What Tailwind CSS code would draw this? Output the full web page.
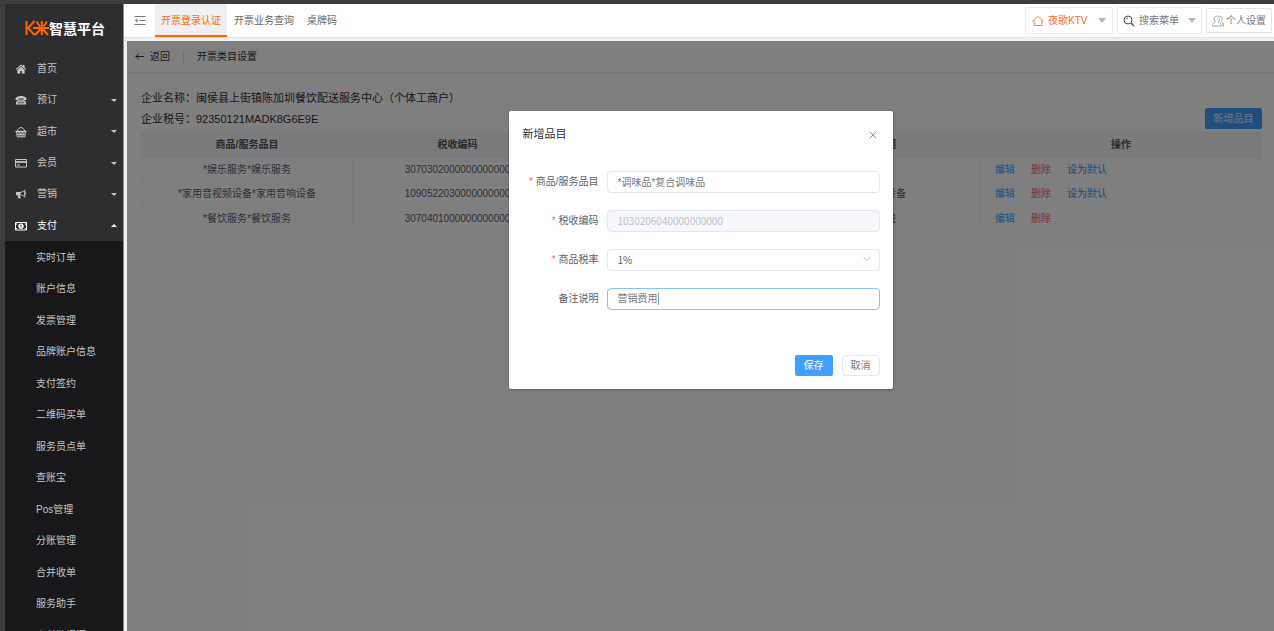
<!DOCTYPE html>
<html lang="zh-CN">
<head>
<meta charset="utf-8">
<meta name="viewport" content="width=device-width, initial-scale=1">
<title>K米智慧平台</title>
<script src="https://cdn.jsdelivr.net/npm/@tailwindcss/browser@4"></script>
</head>
<body class="h-screen overflow-hidden flex bg-[#3d3d3d] pt-1 pl-[5px] font-['Liberation_Sans','Noto_Sans_CJK_SC',sans-serif] text-[10px] leading-4 text-[#606266]">

<aside class="w-[118px] shrink-0 bg-[#2e2e30] text-[#c4c4c4] overflow-hidden">
  <div class="h-[49px] flex items-center justify-center pl-[2px] pb-[2px] text-white">
    <svg class="w-6 h-4 shrink-0" viewBox="0 0 24 16" fill="none" stroke="#f60" stroke-width="2"><path d="M1.500 1v14M9.500 1L3 8l6.500 7M11.500 1.500l3.500 5M22 1.500l-3.500 5M16.800 1v14M8 8h16M16 8.500L10 15M17.500 8.500L23 15"/></svg>
    <span class="text-[14px] leading-5 font-bold font-['Noto_Sans_CJK_SC',sans-serif]">智慧平台</span>
  </div>
  <nav>
    <ul>
      <li class="h-[31px]"><a href="#" class="h-full flex items-center pt-px pl-[10px] pr-[6px]"><svg class="w-3 h-3 mr-[10px]" viewBox="0 0 12 12" fill="currentColor"><path d="M6 1.500L.800 6l.7.7L6 2.900l4.500 3.800.7-.7-1.700-1.500V2H8v1.200zM2.300 6.900V10.500h2.900V8h1.600v2.500h2.900V6.900L6 3.800z"/></svg>首页</a></li>
      <li class="h-[31px]"><a href="#" class="h-full flex items-center pt-px pl-[10px] pr-[6px]"><svg class="w-3 h-3 mr-[10px]" viewBox="0 0 12 12" fill="currentColor"><path d="M.500 5C.500.900 11.500.900 11.500 5v1H8.500V4.600h-5V6h-3z"/><path d="M3.500 5.500h5L11 8v2.500H1V8z"/><path fill="#2e2e30" d="M3.500 6.600h1v.8h-1zM5.500 6.600h1v.8h-1zM7.500 6.600h1v.8h-1zM2.500 8.500h7v.8h-7z"/></svg>预订<span class="ml-auto border-x-[3px] border-t-[3px] border-x-transparent border-t-current"></span></a></li>
      <li class="h-8"><a href="#" class="h-full flex items-center pt-px pl-[10px] pr-[6px]"><svg class="w-3 h-3 mr-[10px]" viewBox="0 0 12 12" fill="none" stroke="currentColor"><path d="M2.500 5C3 .500 9 .500 9.500 5"/><path stroke-width="1.500" d="M.500 5.500h11"/><path d="M1.500 5.500l.7 5.300h7.600l.7-5.300M4 6v4.500M6 6v4.500M8 6v4.500M2 8.300h8"/></svg>超市<span class="ml-auto border-x-[3px] border-t-[3px] border-x-transparent border-t-current"></span></a></li>
      <li class="h-[31px]"><a href="#" class="h-full flex items-center pt-px pl-[10px] pr-[6px]"><svg class="w-3 h-3 mr-[10px]" viewBox="0 0 12 12" fill="none" stroke="currentColor"><path d="M.500 2.500h11v7.500H.500z"/><path stroke-width="1.800" d="M1 5h10"/><path d="M2 8h3"/></svg>会员<span class="ml-auto border-x-[3px] border-t-[3px] border-x-transparent border-t-current"></span></a></li>
      <li class="h-[31px]"><a href="#" class="h-full flex items-center pt-px pl-[10px] pr-[6px]"><svg class="w-3 h-3 mr-[10px]" viewBox="0 0 12 12" fill="currentColor"><path fill-rule="evenodd" d="M1 4h4c2 0 3.800-1 5.200-2.500V4.400a1 1 0 0 1 0 2.200V9.700C8.800 8.200 7 7.300 5 7.200c-.3.900.2 1.700 1 2.300-.5 1.200-1.800 1.200-2.600.8C3 9 2.700 8 2.900 7.200H1zM9.200 3.300c-1 .8-2.200 1.300-3.500 1.500v1.800c1.300.1 2.500.6 3.500 1.400z"/></svg>营销<span class="ml-auto border-x-[3px] border-t-[3px] border-x-transparent border-t-current"></span></a></li>
      <li class="h-8"><a href="#" class="h-full flex items-center pt-px pl-[10px] pr-[6px] text-white"><svg class="w-3 h-3 mr-[10px]" viewBox="0 0 12 12" fill="none" stroke="currentColor"><path d="M.500 2.500h11v7.500H.500z"/><circle cx="6" cy="6.200" r="2.300" fill="currentColor"/><path stroke="#2e2e30" stroke-width=".800" d="M5.400 5.500l.7-.5v2.500"/><path d="M1 4h1.200M9.800 4H11M1 8.500h1.200M9.800 8.500H11"/></svg>支付<span class="ml-auto border-x-[3px] border-b-[3px] border-x-transparent border-b-current"></span></a></li>
    </ul>
    <ul class="bg-[#18181a]">
      <li class="odd:h-8 even:h-[31px]"><a href="#" class="h-full flex items-center pt-px pl-[31px]">实时订单</a></li>
      <li class="odd:h-8 even:h-[31px]"><a href="#" class="h-full flex items-center pt-px pl-[31px]">账户信息</a></li>
      <li class="odd:h-8 even:h-[31px]"><a href="#" class="h-full flex items-center pt-px pl-[31px]">发票管理</a></li>
      <li class="odd:h-8 even:h-[31px]"><a href="#" class="h-full flex items-center pt-px pl-[31px]">品牌账户信息</a></li>
      <li class="odd:h-8 even:h-[31px]"><a href="#" class="h-full flex items-center pt-px pl-[31px]">支付签约</a></li>
      <li class="odd:h-8 even:h-[31px]"><a href="#" class="h-full flex items-center pt-px pl-[31px]">二维码买单</a></li>
      <li class="odd:h-8 even:h-[31px]"><a href="#" class="h-full flex items-center pt-px pl-[31px]">服务员点单</a></li>
      <li class="odd:h-8 even:h-[31px]"><a href="#" class="h-full flex items-center pt-px pl-[31px]">查账宝</a></li>
      <li class="odd:h-8 even:h-[31px]"><a href="#" class="h-full flex items-center pt-px pl-[31px]">Pos管理</a></li>
      <li class="odd:h-8 even:h-[31px]"><a href="#" class="h-full flex items-center pt-px pl-[31px]">分账管理</a></li>
      <li class="odd:h-8 even:h-[31px]"><a href="#" class="h-full flex items-center pt-px pl-[31px]">合并收单</a></li>
      <li class="odd:h-8 even:h-[31px]"><a href="#" class="h-full flex items-center pt-px pl-[31px]">服务助手</a></li>
      <li class="odd:h-8 even:h-[31px]"><a href="#" class="h-full flex items-center pt-px pl-[31px]">支付数据源</a></li>
    </ul>
  </nav>
</aside>

<div class="flex-1 min-w-0 flex flex-col bg-[#f0f0f0] border-l border-[#8a8a8a]">
  <header class="h-[34px] shrink-0 flex items-center bg-white border-b border-[#e4e4e4] text-[#666]">
    <button type="button" aria-label="收起菜单" class="w-[31px] h-full flex items-center justify-center"><svg class="w-3 h-3" viewBox="0 0 12 12" fill="none" stroke="#777"><path d="M.500 1.500h11M5 5.500h6.500M.500 9.500h11"/><path fill="#777" stroke="none" d="M3.500 3.500v4L.800 5.500z"/></svg></button>
    <nav class="h-full flex">
      <a href="#" class="h-full px-[6px] pt-px flex items-center bg-[#f0f0f0] border-b border-[#f60] text-[#ff6a10] shadow-[inset_0_-1px_0_#ff6600]">开票登录认证</a>
      <a href="#" class="h-full px-[7px] pt-px flex items-center">开票业务查询</a>
      <a href="#" class="h-full px-[6px] pt-px flex items-center">桌牌码</a>
    </nav>
    <div class="ml-auto flex items-center gap-1 pr-[2px]">
      <button type="button" class="w-[88px] h-[27px] px-[6px] flex items-center border border-[#eee] rounded-xs text-[#ff6633]"><svg class="w-3 h-3 mr-1" viewBox="0 0 12 12" fill="none" stroke="#ff8040"><path d="M.500 6L6 1.500 11.500 6H9.800v4.500H2.200V6z"/></svg>夜歌KTV<span class="ml-auto border-x-4 border-t-[5px] border-x-transparent border-t-[#b5b5b5]"></span></button>
      <button type="button" class="w-[85px] h-[27px] px-[5px] flex items-center border border-[#eee] rounded-xs text-[#777]"><svg class="w-3 h-3 mr-1" viewBox="0 0 12 12" fill="none" stroke="#555"><circle cx="5" cy="5" r="4"/><path d="M3 4.500A2 2 0 0 1 5 2.800"/><path stroke-width="1.500" d="M8 8l3 3"/></svg>搜索菜单<span class="ml-auto border-x-4 border-t-[5px] border-x-transparent border-t-[#b5b5b5]"></span></button>
      <button type="button" class="w-[66px] h-[25px] px-[5px] flex items-center whitespace-nowrap border border-[#e4e4e4] text-[#777]"><svg class="w-3 h-3 mr-[2px] shrink-0" viewBox="0 0 12 12" fill="none" stroke="#999" stroke-width=".800"><path d="M.500 11V9.500C.500 8 3 8 3.300 7.200 1 4 2.500 1 4.800 1S8.500 4 6.300 7.200C6.500 8 9 8 9 9.500V11zM7 1.200c3.500-.5 4 3.500 2 5.300.3 1 2.500 1 2.500 2.500v2H9.500"/></svg>个人设置</button>
    </div>
  </header>

  <main class="relative flex-1 mt-[3px] ml-[3px] bg-white">
    <div class="h-8 flex items-center pt-px px-2 border-b border-[#ebeef5] text-[#303133]">
      <a href="#" class="flex items-center gap-[5px]"><svg class="w-[10px] h-[10px]" viewBox="0 0 10 10" fill="none" stroke="currentColor"><path d="M9 4.500H1M4 1.500l-3 3 3 3"/></svg>返回</a>
      <span class="mx-[13px] w-px h-3 bg-[#dcdfe6]"></span>
      <h1>开票类目设置</h1>
    </div>
    <div class="pl-[14px] pt-[15px] pr-3">
      <div class="flex justify-between items-end text-[11px] text-[#303133]">
        <div class="leading-[21px] mb-[2px]">
          <p>企业名称：闽侯县上街镇陈加圳餐饮配送服务中心（个体工商户）</p>
          <p>企业税号：92350121MADK8G6E9E</p>
        </div>
        <button type="button" class="w-[57px] h-[21px] mb-[3px] rounded-xs bg-[#409eff] text-[10px] leading-4 text-white/80">新增品目</button>
      </div>
      <table class="w-full table-fixed border-collapse border border-[#f2f4f8] text-center">
        <colgroup><col class="w-[211px]"><col class="w-[210px]"><col class="w-[209px]"><col class="w-[209px]"><col></colgroup>
        <thead>
          <tr class="h-[25px] bg-[#f3f6fb] text-[#555]">
            <th class="border border-[#f2f4f8]">商品/服务品目</th><th class="border border-[#f2f4f8]">税收编码</th><th class="border border-[#f2f4f8]">商品税率</th><th class="border border-[#f2f4f8]">备注说明</th><th class="border border-[#f2f4f8]">操作</th>
          </tr>
        </thead>
        <tbody>
          <tr class="h-6"><td class="border border-[#f2f4f8]">*娱乐服务*娱乐服务</td><td class="border border-[#f2f4f8]">3070302000000000000</td><td class="border border-[#f2f4f8]">1%</td><td class="border border-[#f2f4f8]"></td>
            <td class="border border-[#f2f4f8] text-left pl-[14px]"><div class="flex gap-4"><a href="#" class="text-[#409eff]">编辑</a><a href="#" class="text-[#f56c6c]">删除</a><a href="#" class="text-[#409eff]">设为默认</a></div></td></tr>
          <tr class="h-[25px]"><td class="border border-[#f2f4f8]">*家用音视频设备*家用音响设备</td><td class="border border-[#f2f4f8]">1090522030000000000</td><td class="border border-[#f2f4f8]">1%</td><td class="border border-[#f2f4f8]">家用音响设备</td>
            <td class="border border-[#f2f4f8] text-left pl-[14px]"><div class="flex gap-4"><a href="#" class="text-[#409eff]">编辑</a><a href="#" class="text-[#f56c6c]">删除</a><a href="#" class="text-[#409eff]">设为默认</a></div></td></tr>
          <tr class="h-6"><td class="border border-[#f2f4f8]">*餐饮服务*餐饮服务</td><td class="border border-[#f2f4f8]">3070401000000000000</td><td class="border border-[#f2f4f8]">1%</td><td class="border border-[#f2f4f8]">餐饮免税</td>
            <td class="border border-[#f2f4f8] text-left pl-[14px]"><div class="flex gap-4"><a href="#" class="text-[#409eff]">编辑</a><a href="#" class="text-[#f56c6c]">删除</a></div></td></tr>
        </tbody>
      </table>
    </div>

    <div class="absolute inset-0 flex items-start justify-center bg-black/50 pt-[70px]">
      <form role="dialog" aria-labelledby="dlg" class="w-[384px] rounded-xs bg-white pl-[14px] pr-[13px] pt-[15px] pb-[13px] shadow-[0_1px_3px_rgba(0,0,0,0.3)]">
        <div class="flex items-center justify-between mb-7">
          <h2 id="dlg" class="text-[11px] leading-[17px] text-[#303133]">新增品目</h2>
          <button type="button" aria-label="关闭" class="w-[14px] h-3 flex items-center justify-center"><svg class="w-2 h-2" viewBox="0 0 8 8" fill="none" stroke="#909399"><path d="M.500.500l7 7M7.500.500l-7 7"/></svg></button>
        </div>
        <div class="grid grid-cols-[76px_1fr] gap-x-2 gap-y-[17px] items-center">
          <label for="item" class="text-right"><span class="text-[#f56c6c]">*</span> 商品/服务品目</label>
          <input id="item" value="*调味品*复合调味品" class="w-full h-[22px] px-[10px] pb-[2px] border border-[#e4e7ed] rounded-sm text-[#77797d] outline-none">
          <label for="code" class="text-right"><span class="text-[#f56c6c]">*</span> 税收编码</label>
          <input id="code" disabled value="1030206040000000000" class="w-full h-[22px] px-[10px] pb-[2px] border border-[#e4e7ed] rounded-sm bg-[#f5f7fa] text-[#c0c4cc] font-['Noto_Sans_CJK_SC',sans-serif]">
          <label for="rate" class="text-right"><span class="text-[#f56c6c]">*</span> 商品税率</label>
          <div class="relative">
            <select id="rate" class="block appearance-none w-full h-[22px] px-[10px] border border-[#e4e7ed] rounded-sm text-[#606266] font-['Noto_Sans_CJK_SC',sans-serif] outline-none"><option>1%</option></select>
            <svg class="absolute right-2 top-[6px] w-[10px] h-2 pointer-events-none" viewBox="0 0 10 8" fill="none" stroke="#c0c4cc"><path d="M1.500 2L5 5.500 8.500 2"/></svg>
          </div>
          <label for="memo" class="text-right">备注说明</label>
          <div class="h-[22px] px-[10px] flex items-center border border-[#85bfff] rounded-sm">
            <input id="memo" value="营销费用" class="w-[41px] h-3 text-[#77797d] border-r border-[#909399] outline-none">
          </div>
        </div>
        <div class="flex justify-end gap-[9px] mt-[45px]">
          <button type="submit" class="w-[38px] h-[21px] rounded-xs bg-[#409eff] text-white">保存</button>
          <button type="button" class="w-[38px] h-[21px] rounded-sm border border-[#e4e7ed] bg-white text-[#77797d]">取消</button>
        </div>
      </form>
    </div>
  </main>
</div>
</body>
</html>
